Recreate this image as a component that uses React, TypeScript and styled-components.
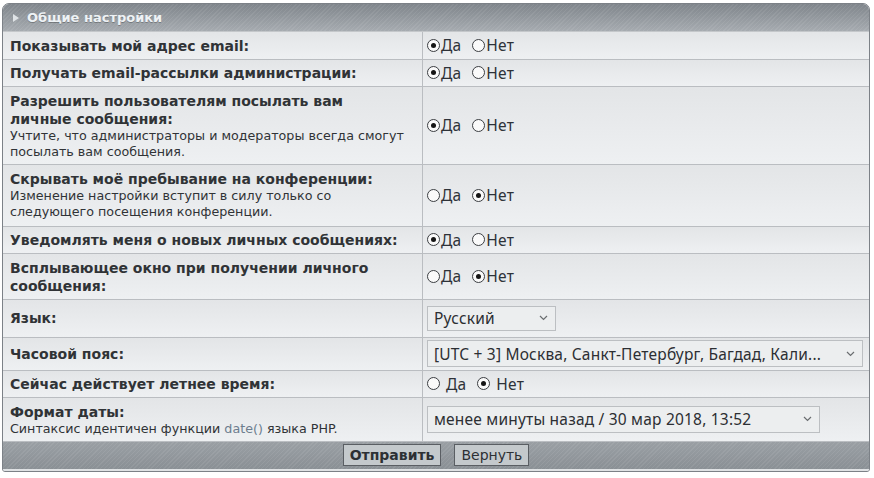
import React from "react";
import styled, { createGlobalStyle } from "styled-components";

const GlobalStyle = createGlobalStyle`
  html, body { margin: 0; padding: 0; background: #ffffff; }
  * { box-sizing: border-box; }
`;

const Page = styled.div`
  padding: 3px 4px 0 2px;
  width: 874px;
`;

const Panel = styled.form`
  border: 1px solid #7c8187;
  border-radius: 7px 7px 3px 3px;
  overflow: hidden;
  background: #e8eaec;
  font-family: "DejaVu Sans", Verdana, sans-serif;
  color: #303336;
`;

const stripes = `repeating-linear-gradient(135deg, rgba(255,255,255,0.07) 0 1px, rgba(0,0,0,0) 1px 3px)`;

const Header = styled.div`
  height: 28px;
  display: flex;
  align-items: center;
  gap: 8px;
  padding-left: 10px;
  background: ${stripes}, linear-gradient(#80868c, #a6abb0);
  border-bottom: 1px solid #c4c7ca;
  color: #eef2f5;
  font-size: 13px;
  font-weight: bold;
  text-shadow: 0 1px 0 rgba(0, 0, 0, 0.25);
`;

const Arrow = styled.span`
  width: 0;
  height: 0;
  border-top: 4px solid transparent;
  border-bottom: 4px solid transparent;
  border-left: 6px solid #dfe3e6;
`;

const Row = styled.div<{ $minH?: number }>`
  display: grid;
  grid-template-columns: 420px 1fr;
  min-height: ${(p) => (p.$minH ? `${p.$minH}px` : "auto")};
  border-bottom: 1px solid #babdc1;
  background: linear-gradient(#e3e5e7, #eef0f2);
`;

const LabelCell = styled.div`
  padding: 4.5px 7px 4px;
  border-right: 1px solid #babdc1;
  display: flex;
  flex-direction: column;
  justify-content: center;
`;

const Title = styled.div`
  font-size: 14px;
  line-height: 18px;
  font-weight: bold;
`;

const Hint = styled.div`
  font-size: 12.7px;
  line-height: 16px;
`;

const HintLink = styled.a`
  color: #6d7d8e;
  text-decoration: none;
`;

const ControlCell = styled.div`
  padding: 2px 4px;
  display: flex;
  align-items: center;
  font-family: "Noto Sans", "Open Sans", sans-serif;
  font-size: 15.5px;
  letter-spacing: 0.2px;
  color: #2e3238;
`;

const RadioGroup = styled.div`
  display: flex;
  align-items: center;
  gap: 11px;
`;

const RadioLabel = styled.label<{ $spaced?: boolean }>`
  display: flex;
  align-items: center;
  gap: ${(p) => (p.$spaced ? "6px" : "1px")};
  line-height: 18px;
`;

const RadioDot = styled.span<{ $on?: boolean }>`
  width: 13px;
  height: 13px;
  border-radius: 50%;
  border: 1px solid #3b3e42;
  background: #fafafa;
  display: inline-flex;
  align-items: center;
  justify-content: center;
  &::after {
    content: "";
    width: 5px;
    height: 5px;
    border-radius: 50%;
    background: #151515;
    display: ${(p) => (p.$on ? "block" : "none")};
  }
`;

const SelectBox = styled.div<{ $w: number; $h: number }>`
  width: ${(p) => p.$w}px;
  height: ${(p) => p.$h}px;
  border: 1px solid #bcbfc2;
  background: #eceeef;
  display: flex;
  align-items: center;
  justify-content: space-between;
  padding: 0 7px 0 6px;
  color: #2c2f33;
  white-space: nowrap;
`;

const Footer = styled.div`
  height: 29px;
  display: flex;
  align-items: center;
  justify-content: center;
  gap: 13px;
  background: ${stripes}, linear-gradient(#9a9fa4, #8a9095);
  border-bottom: 2px solid #dfe2e4;
`;

const Button = styled.button<{ $primary?: boolean }>`
  height: 22px;
  padding: 0 6px;
  border: 1px solid #5a5e63;
  background: #c4c9cc;
  color: #2d3034;
  font-family: "DejaVu Sans", Verdana, sans-serif;
  font-size: 14px;
  font-weight: ${(p) => (p.$primary ? "bold" : "normal")};
  line-height: 20px;
`;

const Chevron = () => (
  <svg width="9" height="6" viewBox="0 0 9 6" fill="none">
    <path d="M1 1l3.5 3.5L8 1" stroke="#6a6d70" strokeWidth="1.2" />
  </svg>
);

const YesNo = ({ yes, spaced }: { yes: boolean; spaced?: boolean }) => (
  <RadioGroup>
    <RadioLabel $spaced={spaced}>
      <RadioDot $on={yes} />
      Да
    </RadioLabel>
    <RadioLabel $spaced={spaced}>
      <RadioDot $on={!yes} />
      Нет
    </RadioLabel>
  </RadioGroup>
);

const Select = ({ value, w, h }: { value: string; w: number; h: number }) => (
  <SelectBox $w={w} $h={h}>
    <span>{value}</span>
    <Chevron />
  </SelectBox>
);

export default function App() {
  return (
    <Page>
      <GlobalStyle />
      <Panel onSubmit={(e) => e.preventDefault()}>
        <Header>
          <Arrow />
          Общие настройки
        </Header>

        <Row>
          <LabelCell>
            <Title>Показывать мой адрес email:</Title>
          </LabelCell>
          <ControlCell>
            <YesNo yes />
          </ControlCell>
        </Row>

        <Row>
          <LabelCell>
            <Title>Получать email-рассылки администрации:</Title>
          </LabelCell>
          <ControlCell>
            <YesNo yes />
          </ControlCell>
        </Row>

        <Row>
          <LabelCell>
            <Title>
              Разрешить пользователям посылать вам
              <br />
              личные сообщения:
            </Title>
            <Hint>
              Учтите, что администраторы и модераторы всегда смогут
              <br />
              посылать вам сообщения.
            </Hint>
          </LabelCell>
          <ControlCell>
            <YesNo yes />
          </ControlCell>
        </Row>

        <Row $minH={62}>
          <LabelCell>
            <Title>Скрывать моё пребывание на конференции:</Title>
            <Hint>
              Изменение настройки вступит в силу только со
              <br />
              следующего посещения конференции.
            </Hint>
          </LabelCell>
          <ControlCell>
            <YesNo yes={false} />
          </ControlCell>
        </Row>

        <Row>
          <LabelCell>
            <Title>Уведомлять меня о новых личных сообщениях:</Title>
          </LabelCell>
          <ControlCell>
            <YesNo yes />
          </ControlCell>
        </Row>

        <Row>
          <LabelCell>
            <Title>
              Всплывающее окно при получении личного
              <br />
              сообщения:
            </Title>
          </LabelCell>
          <ControlCell>
            <YesNo yes={false} />
          </ControlCell>
        </Row>

        <Row $minH={38}>
          <LabelCell>
            <Title>Язык:</Title>
          </LabelCell>
          <ControlCell>
            <Select value="Русский" w={129} h={25} />
          </ControlCell>
        </Row>

        <Row $minH={33}>
          <LabelCell>
            <Title>Часовой пояс:</Title>
          </LabelCell>
          <ControlCell>
            <Select
              value="[UTC + 3] Москва, Санкт-Петербург, Багдад, Кали..."
              w={436}
              h={27}
            />
          </ControlCell>
        </Row>

        <Row>
          <LabelCell>
            <Title>Сейчас действует летнее время:</Title>
          </LabelCell>
          <ControlCell>
            <YesNo yes={false} spaced />
          </ControlCell>
        </Row>

        <Row>
          <LabelCell>
            <Title>Формат даты:</Title>
            <Hint>
              Синтаксис идентичен функции <HintLink href="#">date()</HintLink>{" "}
              языка PHP.
            </Hint>
          </LabelCell>
          <ControlCell>
            <Select value="менее минуты назад / 30 мар 2018, 13:52" w={393} h={27} />
          </ControlCell>
        </Row>

        <Footer>
          <Button $primary type="submit">
            Отправить
          </Button>
          <Button type="button">Вернуть</Button>
        </Footer>
      </Panel>
    </Page>
  );
}
